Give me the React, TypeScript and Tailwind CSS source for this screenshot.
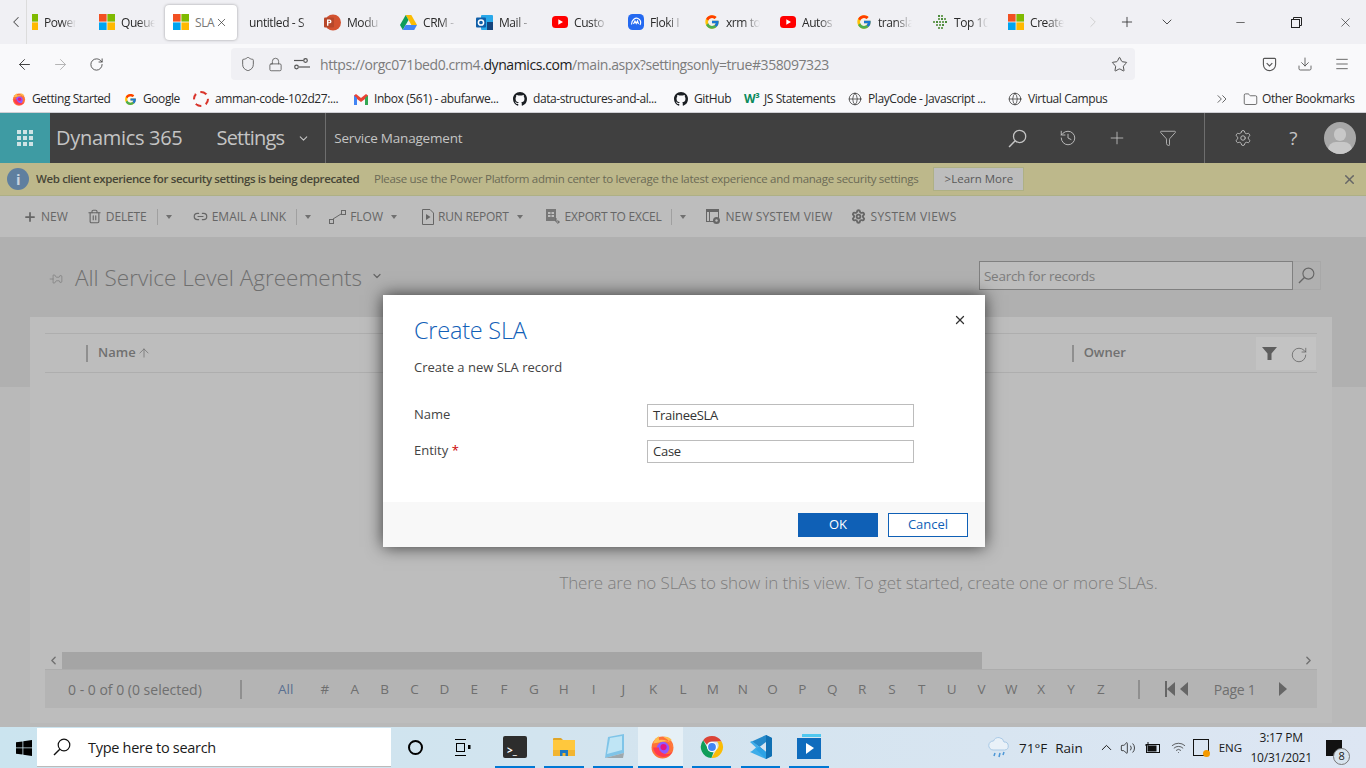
import React from 'react';
import {
  ArrowLeft, ArrowRight, RotateCw, Star, Shield, Lock, Menu, Download, ChevronLeft, ChevronRight, ChevronDown,
  ChevronUp, Plus, X, Minus, Globe, Folder, ChevronsRight, History, Filter, Settings,
  Trash2, Link2, Wifi, Volume2, ArrowUp, RotateCcw, Pin,
} from 'lucide-react';

const Magnifier = ({ size = 18, color = '#333', className = '' }: { size?: number; color?: string; className?: string }) => (
  <svg width={size} height={size} viewBox="0 0 18 18" className={className} fill="none" stroke={color} strokeWidth="1.200">
    <circle cx="11" cy="7" r="5.800" />
    <path d="M6.800 11.200L1 17" strokeWidth="1.400" />
  </svg>
);

const MsLogo = ({ size = 16 }: { size?: number }) => (
  <svg width={size} height={size} viewBox="0 0 16 16" className="shrink-0">
    <rect width="7.6" height="7.6" fill="#f25022" />
    <rect x="8.4" width="7.6" height="7.6" fill="#7fba00" />
    <rect y="8.4" width="7.6" height="7.6" fill="#00a4ef" />
    <rect x="8.4" y="8.4" width="7.6" height="7.6" fill="#ffb900" />
  </svg>
);

const GoogleG = ({ size = 16 }: { size?: number }) => (
  <svg width={size} height={size} viewBox="0 0 48 48" className="shrink-0">
    <path fill="#FFC107" d="M43.6 20H24v8h11.3C33.7 32.7 29.3 36 24 36c-6.6 0-12-5.4-12-12s5.4-12 12-12c3 0 5.8 1.1 7.9 3l5.7-5.7C34 6.1 29.3 4 24 4 13 4 4 13 4 24s9 20 20 20 20-9 20-20c0-1.3-.1-2.7-.4-4z" />
    <path fill="#FF3D00" d="M6.3 14.7l6.6 4.8C14.7 15.1 19 12 24 12c3 0 5.8 1.1 7.9 3l5.7-5.7C34 6.1 29.3 4 24 4 16.3 4 9.7 8.3 6.3 14.7z" />
    <path fill="#4CAF50" d="M24 44c5.2 0 9.9-2 13.4-5.2l-6.2-5.2C29.2 35.1 26.7 36 24 36c-5.2 0-9.6-3.3-11.3-8l-6.5 5C9.5 39.6 16.2 44 24 44z" />
    <path fill="#1976D2" d="M43.6 20H24v8h11.3c-.8 2.2-2.2 4.2-4.1 5.6l6.2 5.2C37 39.2 44 34 44 24c0-1.3-.1-2.7-.4-4z" />
  </svg>
);

const YouTube = () => (
  <svg width="16" height="16" viewBox="0 0 16 16" className="shrink-0">
    <rect y="2" width="16" height="12" rx="3.5" fill="#f00" />
    <path d="M6.3 5.2v5.6L11 8z" fill="#fff" />
  </svg>
);

const PowerPoint = () => (
  <svg width="17" height="17" viewBox="0 0 17 17" className="shrink-0">
    <circle cx="9" cy="8.5" r="8" fill="#d35230" />
    <rect x="0" y="3.5" width="10" height="10" rx="1" fill="#b7472a" />
    <path d="M3 5.5h2.6a1.8 1.8 0 010 3.8H4.4v2.4H3zM4.4 6.7v1.5h1a.75.75 0 000-1.5z" fill="#fff" />
  </svg>
);

const Drive = () => (
  <svg width="17" height="15" viewBox="0 0 17 15" className="shrink-0">
    <path d="M5.7 0h5.6l5.7 10h-5.6z" fill="#fbbc04" />
    <path d="M5.7 0l2.8 5L2.8 15 0 10z" fill="#0f9d58" />
    <path d="M5.6 10H17l-2.8 5H2.8z" fill="#4285f4" />
  </svg>
);

const Outlook = () => (
  <svg width="17" height="17" viewBox="0 0 17 17" className="shrink-0">
    <rect x="5" y="1" width="12" height="15" rx="1" fill="#28a8ea" />
    <rect x="11" y="8" width="6" height="8" fill="#14447d" />
    <rect y="3.5" width="10" height="10" rx="1" fill="#0f5ea8" />
    <circle cx="5" cy="8.5" r="2.6" fill="none" stroke="#fff" strokeWidth="1.5" />
  </svg>
);

const Floki = () => (
  <svg width="16" height="16" viewBox="0 0 16 16" className="shrink-0">
    <rect width="16" height="16" rx="4.5" fill="#2469f0" />
    <path d="M3.500 10.500c0-5 4-7 6.500-6s3.500 4 2 6.500M5.500 10l1.500-3 1.200 2.400L9.500 7l1 3" fill="none" stroke="#fff" strokeWidth="1.200" />
  </svg>
);

const Dots = () => (
  <svg width="16" height="16" viewBox="0 0 16 16" className="shrink-0">
    {[[6, 1], [9, 1], [6, 4], [9, 4], [12, 4], [1, 7], [4, 7], [7, 7], [10, 7], [13, 7], [4, 10], [7, 10], [10, 10], [6, 13], [9, 13]].map(([x, y], i) => (
      <rect key={i} x={x} y={y} width="2" height="2" fill={i % 3 === 0 ? '#4c8c3c' : '#6f9f5c'} />
    ))}
  </svg>
);

const GitHubCat = () => (
  <svg width="14" height="14" viewBox="0 0 16 16" className="shrink-0" fill="#1b1f23">
    <path d="M8 0C3.58 0 0 3.58 0 8c0 3.54 2.29 6.53 5.47 7.59.4.07.55-.17.55-.38 0-.19-.01-.82-.01-1.49-2.01.37-2.53-.49-2.69-.94-.09-.23-.48-.94-.82-1.13-.28-.15-.68-.52-.01-.53.63-.01 1.08.58 1.23.82.72 1.21 1.87.87 2.33.66.07-.52.28-.87.51-1.07-1.78-.2-3.64-.89-3.64-3.95 0-.87.31-1.59.82-2.15-.08-.2-.36-1.02.08-2.12 0 0 .67-.21 2.2.82.64-.18 1.32-.27 2-.27s1.36.09 2 .27c1.53-1.04 2.2-.82 2.2-.82.44 1.1.16 1.92.08 2.12.51.56.82 1.27.82 2.15 0 3.07-1.87 3.75-3.65 3.95.29.25.54.73.54 1.48 0 1.07-.01 1.93-.01 2.2 0 .21.15.46.55.38A8.01 8.01 0 0016 8c0-4.42-3.58-8-8-8z" />
  </svg>
);

const FirefoxIcon = ({ size = 14 }: { size?: number }) => (
  <svg width={size} height={size} viewBox="0 0 24 24" className="shrink-0">
    <circle cx="12" cy="13" r="10.500" fill="#ff7139" />
    <path d="M3 9c1-3 3-6 6-7-1 2-.5 3 0 4 3-1 8 0 11 3 1 1 2 3 2.500 5C21 10 18 5 13 3c3-1 6 0 8 3" fill="#ffbd4f" />
    <circle cx="12.500" cy="13.500" r="6" fill="#9059ff" />
    <circle cx="13" cy="12.500" r="3" fill="#e31587" />
    <path d="M3 13c1 6 5 9 10 9 4 0 7-2 8.500-5-3 3-7 3-10 1-2-1.300-3-3-3-5z" fill="#ff3750" />
  </svg>
);

const ChromeIcon = () => (
  <svg width="24" height="24" viewBox="0 0 24 24" className="shrink-0">
    <path d="M12 1a11 11 0 019.500 5.500H12a5.500 5.500 0 00-5 3.200L3.200 5.200A11 11 0 0112 1z" fill="#db4437" />
    <path d="M21.500 6.500A11 11 0 0111.400 23l4.700-7.800a5.500 5.500 0 00.8-8.700z" fill="#fbbc05" />
    <path d="M3.200 5.200L7.500 13a5.500 5.500 0 006 4.300L11.400 23A11 11 0 013.200 5.200z" fill="#0f9d58" />
    <circle cx="12" cy="12" r="5" fill="#fff" />
    <circle cx="12" cy="12" r="3.900" fill="#4285f4" />
  </svg>
);

const VsCodeIcon = () => (
  <svg width="24" height="26" viewBox="0 0 24 26" className="shrink-0">
    <path d="M17 1l6 3v18l-6 3-10-9.500 3.500-3L17 18V8l-6.500 5L3 7.500 5 6.500z" fill="#2489ca" />
    <path d="M17 1l6 3v18l-6 3z" fill="#1070b3" />
    <path d="M1 8l2-1 14 11v7L1 18l2-1 4-3.500z" fill="#2ea6e8" opacity="0.9" />
  </svg>
);

const tabs = [
  { icon: <GoogleG />, label: 'xrm to' },
  { icon: <YouTube />, label: 'Autos' },
  { icon: <GoogleG />, label: 'transla' },
  { icon: <Dots />, label: 'Top 10' },
  { icon: <MsLogo />, label: 'Create' },
];

const Tab = ({ icon, label }: { icon?: React.ReactNode; label: string }) => (
  <div className="flex h-full w-[76px] shrink-0 items-center gap-[6px] pl-2">
    {icon}
    <span className="w-[34px] overflow-hidden whitespace-nowrap pt-[1px] [mask-image:linear-gradient(to_right,black_50%,transparent)]">{label}</span>
  </div>
);

const bookmarks = [
  { w: 'w-[112px]', icon: <FirefoxIcon />, label: 'Getting Started' },
  { w: 'w-[69px]', icon: <GoogleG size={13} />, label: 'Google' },
  { w: 'w-[161px]', icon: <span className="h-[16px] w-[16px] shrink-0 rounded-full border-2 border-dashed border-[#d9342b]" />, label: 'amman-code-102d27:...' },
  { w: 'w-[159px]', icon: (
    <svg width="14" height="11" viewBox="0 0 14 11" className="shrink-0">
      <path d="M0 1.500V11h3V5l4 3 4-3v6h3V1.500L12 0 7 4 2 0z" fill="#ea4335" />
      <path d="M0 1.500V11h3V4z" fill="#4285f4" />
      <path d="M14 1.500V11h-3V4z" fill="#34a853" />
    </svg>
  ), label: 'Inbox (561) - abufarwe...' },
  { w: 'w-[161px]', icon: <GitHubCat />, label: 'data-structures-and-al...' },
  { w: 'w-[70px]', icon: <GitHubCat />, label: 'GitHub' },
  { w: 'w-[104px]', icon: <span className="w-[14px] shrink-0 text-[12px] font-bold leading-none text-[#0a8a5c]">W³</span>, label: 'JS Statements' },
  { w: 'w-[160px]', icon: <Globe size={14} strokeWidth={1.2} className="shrink-0" />, label: 'PlayCode - Javascript ...' },
  { w: 'w-[112px]', icon: <Globe size={14} strokeWidth={1.2} className="shrink-0" />, label: 'Virtual Campus' },
];

const Caret = () => <span className="ml-[8px] h-0 w-0 border-x-[3.5px] border-t-[4px] border-x-transparent border-t-[#707070]" />;

const alphabet = ['#', 'A', 'B', 'C', 'D', 'E', 'F', 'G', 'H', 'I', 'J', 'K', 'L', 'M', 'N', 'O', 'P', 'Q', 'R', 'S', 'T', 'U', 'V', 'W', 'X', 'Y', 'Z'];

const ToolItem = ({ icon, label, className, labelClass = '' }: { icon: React.ReactNode; label: string; className: string; labelClass?: string }) => (
  <div className={`flex items-center gap-[4px] whitespace-nowrap ${className}`}>
    {icon}
    <span className={labelClass}>{label}</span>
  </div>
);

const ToolSep = () => <span className="ml-[10px] h-[16px] w-px bg-[#a0a0a0]" />;

export default function App() {
  return (
    <div className="relative flex h-[768px] w-[1366px] flex-col overflow-hidden font-['Open_Sans',sans-serif] text-[12px] tracking-[-0.035em] text-[#2a2a2a]">
      {/* browser tabs */}
      <div className="flex h-[44px] items-center bg-[#f0f0f4]">
        <ChevronLeft size={18} strokeWidth={1.4} className="ml-[7px] text-[#555]" />
        <span className="ml-[1px] h-[44px] w-px bg-[#dcdcdc]" />
        <div className="ml-[5px] h-[16px] w-[6px] overflow-hidden">
          <div className="-ml-[10px]"><MsLogo /></div>
        </div>
        <span className="ml-[6px] w-[32px] overflow-hidden whitespace-nowrap pt-[1px] [mask-image:linear-gradient(to_right,black_55%,transparent)]">Power</span>
        <span className="w-[15px]" />
        <Tab icon={<MsLogo />} label="Queue" />
        <div className="-ml-[2px] flex h-[35px] w-[72px] shrink-0 items-center rounded-[4px] bg-white pl-2 shadow-[0_0_3px_rgba(0,0,0,0.35)]">
          <MsLogo />
          <span className="ml-[6px] pt-[1px] text-[#777]">SLA</span>
          <X size={13} strokeWidth={1.3} className="ml-[1px] text-[#333]" />
        </div>
        <span className="w-[12px]" />
        <span className="w-[67px] overflow-hidden whitespace-nowrap pt-[1px] [mask-image:linear-gradient(to_right,black_75%,transparent)]">untitled - S</span>
        <Tab icon={<PowerPoint />} label="Modu" />
        <Tab icon={<Drive />} label="CRM -" />
        <Tab icon={<Outlook />} label="Mail -" />
        <Tab icon={<YouTube />} label="Custo" />
        <Tab icon={<Floki />} label="Floki I" />
        {tabs.map((t) => <Tab key={t.label} icon={t.icon} label={t.label} />)}
        <ChevronRight size={18} strokeWidth={1.2} className="ml-[8px] text-[#ccc]" />
        <Plus size={16} strokeWidth={1.3} className="ml-[17px] text-[#333]" />
        <ChevronDown size={16} strokeWidth={1.3} className="ml-[24px] text-[#333]" />
        <Minus size={13} strokeWidth={1.2} className="ml-[59px] text-[#222]" />
        <svg width="11" height="11" viewBox="0 0 11 11" className="ml-[44px]" fill="none" stroke="#222">
          <rect x="0.500" y="2.500" width="8" height="8" />
          <path d="M2.500 2.500v-2h8v8h-2" />
        </svg>
        <X size={15} strokeWidth={1} className="ml-[36px] text-[#222]" />
      </div>

      {/* url bar */}
      <div className="flex h-[40px] items-center bg-[#f9f9fb]">
        <ArrowLeft size={17} strokeWidth={1.4} className="ml-[16px] text-[#444]" />
        <ArrowRight size={17} strokeWidth={1.4} className="ml-[19px] text-[#b4b4b4]" />
        <RotateCw size={15} strokeWidth={1.4} className="ml-[20px] text-[#444]" />
        <div className="ml-[127px] flex h-[32px] w-[904px] items-center rounded-[4px] bg-[#f0f0f4] text-[14px] text-[#7c7c7c]">
          <Shield size={16} strokeWidth={1.3} className="ml-[9px] text-[#555]" />
          <Lock size={15} strokeWidth={1.3} className="ml-[12px] text-[#555]" />
          <svg width="16" height="12" viewBox="0 0 16 12" className="ml-[11px]" fill="none" stroke="#555" strokeWidth="1.200">
            <circle cx="11.500" cy="2.500" r="1.800" />
            <path d="M0 2.500h9" />
            <circle cx="2.500" cy="9" r="1.800" />
            <path d="M5 9h11" />
          </svg>
          <span className="ml-[10px]">https://orgc071bed0.crm4.<span className="text-[#1c1c1c]">dynamics.com</span>/main.aspx?settingsonly=true#358097323</span>
          <Star size={17} strokeWidth={1.3} className="ml-auto mr-[7px] text-[#444]" />
        </div>
        <svg width="15" height="15" viewBox="0 0 16 16" className="ml-[127px]" fill="none" stroke="#555" strokeWidth="1.200">
          <path d="M2.500 1.500h11a1 1 0 011 1V8a6.500 6.500 0 01-13 0V2.500a1 1 0 011-1z" />
          <path d="M5 6.500L8 9.500l3-3" />
        </svg>
        <Download size={16} strokeWidth={1.3} className="ml-[20px] text-[#555]" />
        <Menu size={16} strokeWidth={1.3} className="ml-[21px] text-[#555]" />
      </div>

      {/* bookmarks */}
      <div className="flex h-[29px] items-center border-b border-[#cfcfd4] bg-[#f9f9fb] pl-[12px] pt-[2px]">
        {bookmarks.map((b) => (
          <div key={b.label} className={`flex items-center gap-[6px] whitespace-nowrap ${b.w}`}>
            {b.icon}
            <span>{b.label}</span>
          </div>
        ))}
        <ChevronsRight size={16} strokeWidth={1.2} className="ml-[94px] text-[#444]" />
        <Folder size={15} strokeWidth={1.2} className="ml-[13px] text-[#444]" />
        <span className="ml-[4px]">Other Bookmarks</span>
      </div>

      {/* dynamics nav, dimmed by the dialog */}
      <div className="flex h-[50px] items-center bg-[#404040] text-[#c4c4c4]">
        <div className="flex h-full w-[50px] items-center justify-center bg-[#3e9ba3]">
          <div className="grid grid-cols-3 gap-[2px]">
            {Array.from({ length: 9 }).map((_, i) => <span key={i} className="h-[4px] w-[4px] bg-[#cfe3e5]" />)}
          </div>
        </div>
        <span className="ml-[6px] text-[20px] tracking-[-0.015em]">Dynamics 365</span>
        <span className="ml-[34px] text-[20px] tracking-[-0.04em]">Settings</span>
        <ChevronDown size={13} className="ml-[13px]" />
        <span className="ml-[15px] h-full w-px bg-[#6e6e6e]" />
        <span className="ml-[8px] text-[13.500px] tracking-[-0.015em]">Service Management</span>
        <Magnifier size={19} color="#c4c4c4" className="ml-[546px]" />
        <History size={18} strokeWidth={1.2} className="ml-[32px]" />
        <Plus size={20} strokeWidth={1} className="ml-[30px]" />
        <Filter size={18} strokeWidth={1.1} className="ml-[32px]" />
        <span className="ml-[27px] h-full w-px bg-[#6e6e6e]" />
        <Settings size={18} strokeWidth={1.2} className="ml-[29px]" />
        <span className="ml-[37px] text-[19px] leading-none">?</span>
        <div className="relative ml-[27px] h-[32px] w-[32px] overflow-hidden rounded-full bg-[#a8a8a8]">
          <span className="absolute left-[10px] top-[6px] h-[13px] w-[12px] rounded-full bg-[#c8c8c8]" />
          <span className="absolute left-[4px] top-[20px] h-[16px] w-[24px] rounded-full bg-[#c8c8c8]" />
        </div>
      </div>

      {/* notification */}
      <div className="flex h-[33px] items-center border-b border-[#aeb085] bg-[#bdb88b] text-[11.500px] text-[#6b6a55]">
        <span className="ml-[7px] flex h-[22px] w-[22px] items-center justify-center rounded-full bg-[#5f7f9f] text-[15px] font-bold text-[#c8d4df]">i</span>
        <span className="ml-[7px] w-[338px] whitespace-nowrap text-[11.500px] font-semibold tracking-[-0.033em] text-[#474637]">Web client experience for security settings is being deprecated</span>
        <span className="whitespace-nowrap tracking-[-0.025em]">Please use the Power Platform admin center to leverage the latest experience and manage security settings</span>
        <span className="ml-[15px] flex h-[24px] w-[91px] items-center justify-center border border-[#aeb085] bg-[#bdbdbd] text-[11.500px] tracking-[0em] text-[#595959]">&gt;Learn More</span>
        <X size={15} strokeWidth={2.4} className="ml-[318px] text-[#666]" />
      </div>

      {/* command bar */}
      <div className="flex h-[41px] items-center bg-[#bdbdbd] text-[12px] tracking-[0em] text-[#666]">
        <ToolItem className="ml-[23px]" icon={<Plus size={14} strokeWidth={3} />} label="NEW" />
        <ToolItem className="ml-[19px]" labelClass="tracking-[-0.01em]" icon={<Trash2 size={15} strokeWidth={1.8} />} label="DELETE" />
        <ToolSep /><Caret />
        <ToolItem className="ml-[21px]" icon={<Link2 size={15} strokeWidth={1.9} />} label="EMAIL A LINK" />
        <ToolSep /><Caret />
        <ToolItem className="ml-[18px]" icon={
          <svg width="17" height="14" viewBox="0 0 17 14" fill="none" stroke="#666"><rect x="0.500" y="9.500" width="4" height="4" /><rect x="12.500" y="0.500" width="4" height="4" /><path d="M4 9L12 4" /></svg>
        } label="FLOW" />
        <Caret />
        <ToolItem className="ml-[25px]" labelClass="tracking-[-0.02em]" icon={
          <svg width="12" height="16" viewBox="0 0 12 16" fill="none" stroke="#666"><path d="M.5.500h7.500l3.500 3.500v11.500H.5z" /><path d="M4 5l4.500 3L4 11z" fill="#666" stroke="none" /></svg>
        } label="RUN REPORT" />
        <Caret />
        <ToolItem className="ml-[23px]" labelClass="tracking-[-0.02em]" icon={
          <svg width="15" height="16" viewBox="0 0 15 16"><rect width="10" height="12" fill="#777" /><path d="M2 3h2.500v2H2zM5.500 3H8v2H5.500zM2 6h2.500v2H2zM5.500 6H8v2H5.500z" fill="#bdbdbd" /><path d="M10 9v4h3M11.500 11.500l2 1.500-2 1.500" fill="none" stroke="#666" /></svg>
        } label="EXPORT TO EXCEL" />
        <ToolSep /><Caret />
        <ToolItem className="ml-[20px]" labelClass="tracking-[0.01em]" icon={
          <svg width="15" height="16" viewBox="0 0 15 16"><rect x="0.500" y="0.500" width="12" height="12" fill="none" stroke="#666" /><rect width="13" height="3" fill="#666" /><rect x="3" y="3" width="1" height="10" fill="#666" /><circle cx="10.500" cy="11.500" r="3.500" fill="#666" /><circle cx="10.500" cy="11.500" r="1.200" fill="#bdbdbd" /></svg>
        } label="NEW SYSTEM VIEW" />
        <ToolItem className="ml-[19px]" labelClass="tracking-[0.03em]" icon={<Settings size={15} strokeWidth={3} />} label="SYSTEM VIEWS" />
      </div>

      {/* page, dimmed */}
      <div className="flex min-h-0 flex-1 flex-col bg-[linear-gradient(#b0b0b0_150px,#b9b9b9_150px)]">
        <div className="flex h-[80px] shrink-0 items-start">
          <Pin size={14} strokeWidth={1.1} className="ml-[49px] mt-[35px] rotate-90 text-[#777]" />
          <h1 className="ml-[12px] mt-[24px] text-[22.500px] font-light tracking-[0em] text-[#6f6f6f]">All Service Level Agreements</h1>
          <ChevronDown size={12} strokeWidth={2.4} className="ml-[9px] mt-[33px] text-[#666]" />
          <div className="ml-[596px] mt-[24px] flex h-[29px] w-[314px] items-center border border-[#808080] bg-[#bdbdbd] pl-[4px] pt-[1px] text-[13.500px] tracking-[-0.02em] text-[#7c7c7c]">Search for records</div>
          <div className="mt-[24px] flex h-[29px] w-[28px] items-center justify-center border border-l-0 border-[#a8a8a8]">
            <Magnifier size={17} color="#666" />
          </div>
        </div>
        <div className="ml-[30px] mr-[34px] flex h-[406px] flex-col bg-[#bdbdbd] px-[15px] pb-[15px] pt-[16px]">
          <div className="flex h-[40px] shrink-0 items-center border-y border-[#aeaeae] text-[13px] font-semibold tracking-[0em] text-[#707070]">
            <span className="ml-[41px] h-[17px] w-[2px] bg-[#8f8f8f]" />
            <span className="ml-[10px]">Name</span>
            <ArrowUp size={14} strokeWidth={1.3} className="ml-[1px]" />
            <span className="ml-[921px] h-[17px] w-[2px] bg-[#8f8f8f]" />
            <span className="ml-[10px]">Owner</span>
            <div className="ml-[130px] flex h-[33px] w-[60px] items-center bg-[#c3c3c3]">
              <svg width="15" height="13" viewBox="0 0 15 13" className="ml-[6px]"><path d="M0 0h15L9.500 6.500V13h-4V6.500z" fill="#5e5e5e" /></svg>
              <RotateCcw size={18} strokeWidth={1} className="ml-[13px] mt-[3px] -scale-x-100 text-[#5e5e5e]" />
            </div>
          </div>
          <div className="flex min-h-0 flex-1 flex-col">
            <div className="flex flex-1 items-end justify-center pb-[57px] pl-[355px] text-[17px] font-light tracking-[-0.006em] text-[#7d7d7d]">
              <span className="whitespace-nowrap">There are no SLAs to show in this view. To get started, create one or more SLAs.</span>
            </div>
          </div>
          <div className="flex h-[18px] shrink-0 items-center border-b border-[#acacac]">
            <div className="flex h-[17px] w-[17px] items-center justify-center"><ChevronLeft size={13} strokeWidth={2.6} className="text-[#707070]" /></div>
            <div className="h-[17px] w-[920px] bg-[#a5a5a5]" />
            <div className="ml-auto flex h-[17px] w-[17px] items-center justify-center"><ChevronRight size={13} strokeWidth={2.6} className="text-[#707070]" /></div>
          </div>
          <div className="flex h-[38px] shrink-0 items-center bg-[#b4b4b4] text-[13.500px] tracking-[0em] text-[#6f6f6f]">
            <span className="ml-[23px] w-[172px] text-[14px]">0 - 0 of 0 (0 selected)</span>
            <span className="h-[19px] w-[2px] bg-[#8f8f8f]" />
            <span className="ml-[36px] w-[32px] text-[#5a7091]">All</span>
            {alphabet.map((l) => <span key={l} className="w-[29.850px] text-center">{l}</span>)}
            <span className="ml-[22px] h-[19px] w-[2px] bg-[#8f8f8f]" />
            <div className="ml-[25px] flex items-center">
              <span className="h-[16px] w-[2px] bg-[#666]" />
              <span className="h-0 w-0 border-y-[7px] border-r-[8px] border-y-transparent border-r-[#666]" />
              <span className="ml-[5px] h-0 w-0 border-y-[7px] border-r-[8px] border-y-transparent border-r-[#666]" />
            </div>
            <span className="ml-[26px] text-[14px] tracking-[-0.02em]">Page 1</span>
            <span className="ml-[24px] h-0 w-0 border-y-[7px] border-l-[8px] border-y-transparent border-l-[#666]" />
          </div>
        </div>
      </div>

      {/* taskbar */}
      <div className="flex h-[41px] shrink-0 items-center bg-[linear-gradient(to_right,#cbe4ef,#d3e4ef_45%,#dde6f3)] text-[13.500px] tracking-[0em] text-[#1a1a1a]">
        <svg width="16" height="16" viewBox="0 0 16 16" className="ml-[16px]" fill="#000">
          <path d="M0 2.300L6.500 1.400V7.500H0zM7.300 1.300L16 0v7.500H7.300zM0 8.300h6.500v6.300L0 13.700zM7.300 8.300H16V16l-8.700-1.300z" />
        </svg>
        <div className="ml-[5px] flex h-[39px] w-[354px] items-center border-b border-[#bbb] bg-white text-[14.500px] tracking-[-0.02em]">
          <Magnifier size={18} color="#111" className="ml-[16px]" />
          <span className="ml-[17px] pt-[2px]">Type here to search</span>
        </div>
        <span className="ml-[17px] h-[15px] w-[15px] rounded-full border-[2.500px] border-black" />
        <svg width="17" height="17" viewBox="0 0 17 17" className="ml-[31px]" fill="none" stroke="#000">
          <path d="M1 .500h11M1 16.500h11" />
          <rect x="2.500" y="4.500" width="8" height="8" />
          <rect x="14" y="6" width="2.500" height="4" fill="#000" stroke="none" />
        </svg>
        <div className="ml-[24px] flex h-[41px] w-[40px] flex-col items-center justify-center border-b-[2px] border-[#0078d4]">
          <span className="flex h-[22px] w-[24px] items-end rounded-[2px] bg-[#2d2d2d] pb-[3px] pl-[4px] text-[10px] font-bold leading-none text-white">&gt;_</span>
        </div>
        <div className="ml-[9px] flex h-[41px] w-[40px] flex-col items-center justify-center border-b-[2px] border-[#0078d4]">
          <svg width="22" height="22" viewBox="0 0 22 22">
            <path d="M0 3a1 1 0 011-1h7l2 2H0z" fill="#e0a526" />
            <rect y="4" width="22" height="16" fill="#ffc83d" />
            <rect y="14" width="22" height="6" fill="#f2b531" />
            <path d="M7 14h8v6h-2.500v-3h-3v3H7z" fill="#1d78c1" />
          </svg>
        </div>
        <div className="ml-[9px] flex h-[41px] w-[40px] flex-col items-center justify-center border-b-[2px] border-[#0078d4]">
          <svg width="24" height="26" viewBox="0 0 24 26">
            <path d="M7 3l16-3v19L4 24z" fill="#7fc4e8" />
            <path d="M9 4l12-2v14L6 20z" fill="#bfe5f5" />
            <path d="M4 24l19-5-1 5z" fill="#9ea8ad" />
          </svg>
        </div>
        <div className="ml-[5px] flex h-[41px] w-[45px] items-center justify-center border-b-[2px] border-[#0078d4] bg-[#e6f0f6] pl-[3px]">
          <FirefoxIcon size={25} />
        </div>
        <div className="ml-[9px] flex h-[41px] w-[39px] items-center justify-center border-b-[2px] border-[#0078d4]"><ChromeIcon /></div>
        <div className="ml-[10px] flex h-[41px] w-[39px] items-center justify-center border-b-[2px] border-[#0078d4]"><VsCodeIcon /></div>
        <div className="ml-[9px] flex h-[41px] w-[40px] items-center justify-center border-b-[2px] border-[#0078d4]">
          <svg width="24" height="25" viewBox="0 0 24 25">
            <path d="M5 0h19v3H5z" fill="#50c8f0" />
            <rect y="4" width="24" height="21" fill="#0f6cbd" />
            <path d="M9 9l8 5-8 6z" fill="#fff" />
          </svg>
        </div>
        <svg width="22" height="24" viewBox="0 0 22 24" className="ml-[159px]">
          <path d="M5 14a4.500 4.500 0 01.500-9 5.500 5.500 0 0110.500 1 4 4 0 01.500 8z" fill="#e9f1f8" stroke="#a9c9e6" />
          <path d="M7 17l-1 3M12 17l-1 4M16 16l-1 3" stroke="#4d97d6" strokeWidth="1.500" />
        </svg>
        <span className="ml-[9px] pt-[1px]">71°F</span>
        <span className="ml-[8px] pt-[1px]">Rain</span>
        <ChevronUp size={17} strokeWidth={1.4} className="ml-[15px]" />
        <Volume2 size={16} strokeWidth={1.2} className="ml-[5px]" />
        <svg width="17" height="12" viewBox="0 0 17 12" className="ml-[8px]" fill="none" stroke="#111">
          <rect x="2.500" y="2.500" width="13" height="8" />
          <rect x="4" y="4" width="8" height="5" fill="#111" />
          <path d="M4 0v3M1 3h4" />
        </svg>
        <Wifi size={15} strokeWidth={1.2} className="ml-[10px] text-[#333]" />
        <div className="relative ml-[7px] h-[17px] w-[16px] border border-[#111]">
          <span className="absolute -bottom-[2px] -right-[2px] h-[7px] w-[7px] rounded-full bg-[#f59a00]" />
        </div>
        <span className="ml-[10px] text-[11.500px]">ENG</span>
        <div className="ml-[9px] flex w-[60px] flex-col items-center text-[12px] leading-[20px] tracking-[-0.02em]">
          <span>3:17 PM</span>
          <span>10/31/2021</span>
        </div>
        <div className="relative ml-[15px] h-[16px] w-[16px] bg-[#111]">
          <span className="absolute -bottom-[9px] left-[7px] flex h-[17px] w-[17px] items-center justify-center rounded-full border border-[#777] bg-[#d8e4ee] text-[11px]">8</span>
        </div>
      </div>

      {/* create sla dialog */}
      <div className="absolute left-[383px] top-[295px] flex h-[252px] w-[602px] flex-col bg-white shadow-[0_0_16px_rgba(0,0,0,0.7)]">
        <div className="relative flex-1 pl-[31px] tracking-[0em]">
          <X size={14} strokeWidth={2.2} className="absolute right-[18px] top-[18px] text-[#333]" />
          <h2 className="mt-[18px] text-[23.500px] font-light leading-[34px] tracking-[-0.01em] text-[#1160b7]">Create SLA</h2>
          <p className="mt-[11px] text-[13px] leading-[18px] text-[#444]">Create a new SLA record</p>
          <div className="mt-[28px] flex h-[23px] items-start text-[13px] text-[#444]">
            <span className="w-[233px] leading-[20px]">Name</span>
            <div className="flex h-[23px] w-[267px] items-center border border-[#bcbcbc] pl-[5px] pt-[1px] tracking-[-0.02em] text-[#333]">TraineeSLA</div>
          </div>
          <div className="mt-[13px] flex h-[23px] items-start text-[13px] text-[#444]">
            <span className="w-[233px] leading-[20px]">Entity <span className="text-[#c00]">*</span></span>
            <div className="flex h-[23px] w-[267px] items-center border border-[#bcbcbc] pl-[5px] pt-[1px] tracking-[-0.02em] text-[#333]">Case</div>
          </div>
        </div>
        <div className="flex h-[45px] items-start justify-end gap-[10px] bg-[#f8f8f8] pr-[17px] pt-[11px] text-[13px] tracking-[0em]">
          <button className="h-[24px] w-[80px] bg-[#0f60b6] text-white">OK</button>
          <button className="h-[24px] w-[80px] border border-[#0f60b6] bg-white text-[#0f60b6]">Cancel</button>
        </div>
      </div>
    </div>
  );
}
